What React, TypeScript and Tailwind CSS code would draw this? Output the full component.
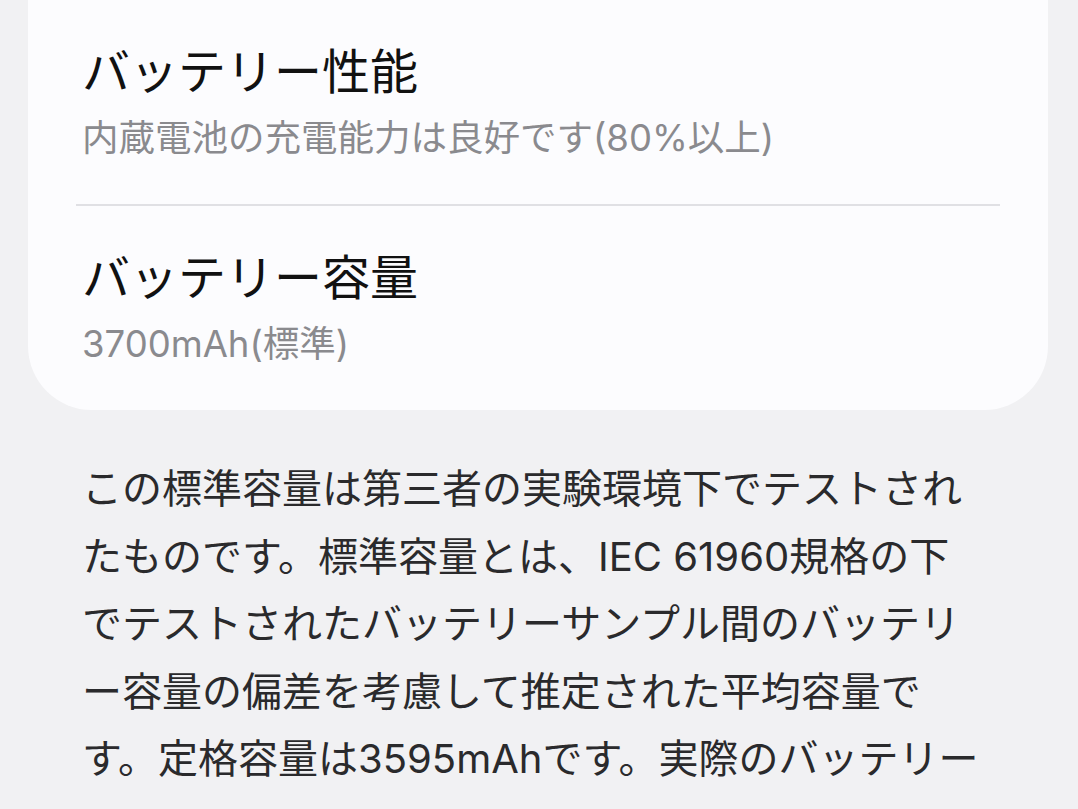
const font = { fontFamily: 'Inter, "Noto Sans CJK JP", sans-serif' }

const items = [
  { title: 'バッテリー性能', sub: '内蔵電池の充電能力は良好です(80%以上)' },
  { title: 'バッテリー容量', sub: '3700mAh(標準)' },
]

const lines = [
  'この標準容量は第三者の実験環境下でテストされ',
  'たものです。標準容量とは、IEC 61960規格の下',
  'でテストされたバッテリーサンプル間のバッテリ',
  'ー容量の偏差を考慮して推定された平均容量で',
  'す。定格容量は3595mAhです。実際のバッテリー',
]

export default function App() {
  return (
    <main
      className="min-h-screen bg-[#f1f1f3] pl-[28px] pr-[30px] overflow-hidden"
      style={font}
    >
      <section className="bg-[#fcfcfe] rounded-b-[64px] px-12">
        {items.map((item, i) => (
          <div key={item.title}>
            {i > 0 && <div className="h-[2px] bg-[#e0e0e4]" />}
            <div className="pt-[42px] pb-[44px] flex flex-col gap-[14px] pl-[6px]">
              <h2 className="text-[48px] leading-[60px] text-[#111] font-normal">
                {item.title}
              </h2>
              <p className="text-[36.5px] leading-[44px] text-[#8a8a8e]">{item.sub}</p>
            </div>
          </div>
        ))}
      </section>

      <div className="pl-[54px] pt-[45px] text-[40px] leading-[67.5px] text-[#2a2a2c] whitespace-nowrap">
        {lines.map((line) => (
          <p key={line}>{line}</p>
        ))}
      </div>
    </main>
  )
}
